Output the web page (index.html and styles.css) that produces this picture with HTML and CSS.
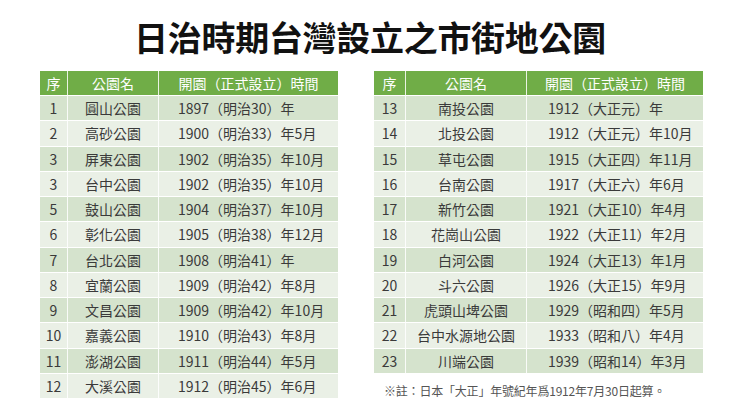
FILE: index.html
```html
<!DOCTYPE html>
<html lang="zh-Hant">
<head>
<meta charset="utf-8">
<link rel="stylesheet" href="styles.css">
</head>
<body>
<div class="page">
  <h1 class="title">日治時期台灣設立之市街地公園</h1>
  <div class="tables">
    <table class="tbl tbl-left">
      <colgroup><col class="c1"><col class="c2"><col class="c3"></colgroup>
      <thead><tr><th>序</th><th>公園名</th><th>開園（正式設立）時間</th></tr></thead>
      <tbody>
        <tr><td>1</td><td>圓山公園</td><td class="d">1897（明治30）年</td></tr>
        <tr><td>2</td><td>高砂公園</td><td class="d">1900（明治33）年5月</td></tr>
        <tr><td>3</td><td>屏東公園</td><td class="d">1902（明治35）年10月</td></tr>
        <tr><td>3</td><td>台中公園</td><td class="d">1902（明治35）年10月</td></tr>
        <tr><td>5</td><td>鼓山公園</td><td class="d">1904（明治37）年10月</td></tr>
        <tr><td>6</td><td>彰化公園</td><td class="d">1905（明治38）年12月</td></tr>
        <tr><td>7</td><td>台北公園</td><td class="d">1908（明治41）年</td></tr>
        <tr><td>8</td><td>宜蘭公園</td><td class="d">1909（明治42）年8月</td></tr>
        <tr><td>9</td><td>文昌公園</td><td class="d">1909（明治42）年10月</td></tr>
        <tr><td>10</td><td>嘉義公園</td><td class="d">1910（明治43）年8月</td></tr>
        <tr><td>11</td><td>澎湖公園</td><td class="d">1911（明治44）年5月</td></tr>
        <tr><td>12</td><td>大溪公園</td><td class="d">1912（明治45）年6月</td></tr>
      </tbody>
    </table>
    <div class="right">
      <table class="tbl tbl-right">
        <colgroup><col class="c1"><col class="c2"><col class="c3"></colgroup>
        <thead><tr><th>序</th><th>公園名</th><th>開園（正式設立）時間</th></tr></thead>
        <tbody>
          <tr><td>13</td><td>南投公園</td><td class="d">1912（大正元）年</td></tr>
          <tr><td>14</td><td>北投公園</td><td class="d">1912（大正元）年10月</td></tr>
          <tr><td>15</td><td>草屯公園</td><td class="d">1915（大正四）年11月</td></tr>
          <tr><td>16</td><td>台南公園</td><td class="d">1917（大正六）年6月</td></tr>
          <tr><td>17</td><td>新竹公園</td><td class="d">1921（大正10）年4月</td></tr>
          <tr><td>18</td><td>花崗山公園</td><td class="d">1922（大正11）年2月</td></tr>
          <tr><td>19</td><td>白河公園</td><td class="d">1924（大正13）年1月</td></tr>
          <tr><td>20</td><td>斗六公園</td><td class="d">1926（大正15）年9月</td></tr>
          <tr><td>21</td><td>虎頭山埤公園</td><td class="d">1929（昭和四）年5月</td></tr>
          <tr><td>22</td><td>台中水源地公園</td><td class="d">1933（昭和八）年4月</td></tr>
          <tr><td>23</td><td>川端公園</td><td class="d">1939（昭和14）年3月</td></tr>
        </tbody>
      </table>
      <p class="note">※註：日本「大正」年號紀年爲1912年7月30日起算。</p>
    </div>
  </div>
</div>
</body>
</html>
```

FILE: styles.css
```css
html, body {
  margin: 0;
  padding: 0;
  background: #ffffff;
}
body {
  font-family: "Noto Sans CJK TC", "Noto Sans", sans-serif;
  color: #3a3a3a;
}
.page {
  width: 740px;
  height: 416px;
  display: flex;
  flex-direction: column;
}
.title {
  margin: 0;
  height: 71px;
  box-sizing: border-box;
  padding-top: 15px;
  text-align: center;
  font-size: 34px;
  line-height: 44px;
  font-weight: 700;
  color: #111;
  letter-spacing: -0.3px;
}
.tables {
  display: flex;
  align-items: flex-start;
  gap: 36px;
  padding-left: 40px;
}
.tbl {
  border-collapse: separate;
  border-spacing: 0;
  table-layout: fixed;
  font-size: 14px;
}
.tbl-left { width: 298px; }
.tbl-left .c1 { width: 28px; }
.tbl-left .c2 { width: 91px; }
.tbl-left .c3 { width: 179px; }
.tbl-right { width: 329px; }
.tbl-right .c1 { width: 32px; }
.tbl-right .c2 { width: 121px; }
.tbl-right .c3 { width: 176px; }
.tbl th, .tbl td {
  padding: 0;
  text-align: center;
  white-space: nowrap;
  border-right: 1px solid rgba(255,255,255,0.85);
  line-height: 20px;
}
.tbl th:last-child, .tbl td:last-child {
  border-right: none;
}
.tbl thead tr {
  height: 24px;
}
.tbl th {
  background: #70ad47;
  color: #ffffff;
  font-weight: 400;
}
.tbl tbody tr {
  height: 25.25px;
}
.tbl td {
  border-top: 1px solid #ffffff;
}
.tbl tbody tr:nth-child(odd) td {
  background: #d5e3cd;
}
.tbl tbody tr:nth-child(even) td {
  background: #eaf0e6;
}
.tbl td.d {
  text-align: left;
  padding-left: 19px;
}
.tbl-right td.d {
  padding-left: 21px;
}
.note {
  margin: 10px 0 0 10px;
  font-size: 12px;
  line-height: 16px;
  color: #555;
  letter-spacing: -0.2px;
}
```
